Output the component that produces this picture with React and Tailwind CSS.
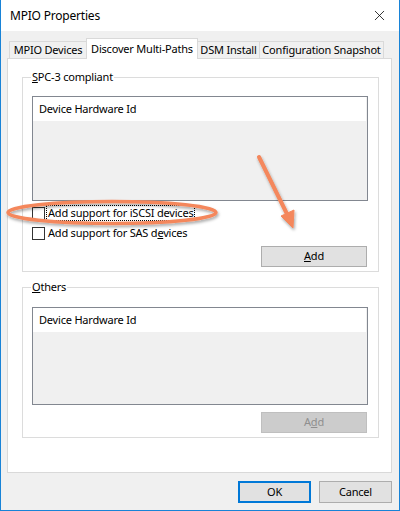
import { X } from 'lucide-react';

const font = { fontFamily: '"Noto Sans", "Open Sans", sans-serif', letterSpacing: '-0.2px' };

const Tab = ({ label, active, className }) => (
  <div
    className={
      active
        ? `relative z-10 -mb-px flex h-[21px] items-start justify-center whitespace-nowrap border border-b-0 border-[#d9d9d9] bg-white pt-[2px] ${className}`
        : `flex h-[17px] items-center justify-center whitespace-nowrap border border-b-0 border-[#d9d9d9] bg-[#f0f0f0] pt-[1px] ${className}`
    }
  >
    {label}
  </div>
);

const DeviceList = ({ height }) => (
  <div className={`flex flex-col border border-[#828790] bg-[#f0f0f0] ${height}`}>
    <div className="mr-[1px] flex h-[24px] items-center bg-white pl-[6px]">Device Hardware Id</div>
  </div>
);

const GroupBox = ({ label, children, className }) => (
  <div className={`relative ml-[14px] w-[357px] border border-[#dcdcdc] pl-[9px] pr-[10px] ${className}`}>
    <span className="absolute -top-[9px] left-[8px] bg-white px-[1px] leading-[16px]">{label}</span>
    {children}
  </div>
);

const Button = ({ children, disabled, className = '' }) => (
  <div
    className={
      disabled
        ? `flex h-[21px] w-[106px] items-center justify-center border border-[#bfbfbf] bg-[#cccccc] text-[#8f8f8f] ${className}`
        : `flex h-[21px] w-[106px] items-center justify-center border border-[#adadad] bg-[#e1e1e1] ${className}`
    }
  >
    {children}
  </div>
);

const Checkbox = ({ children, focused }) => (
  <div className="flex h-[16px] items-center">
    <div className="h-[13px] w-[13px] border border-[#333333] bg-white" />
    <span
      className={`ml-[2px] whitespace-nowrap px-[1px] leading-[14px] ${
        focused ? 'outline outline-1 outline-dotted outline-black' : ''
      }`}
    >
      {children}
    </span>
  </div>
);

export default function App() {
  return (
    <div className="relative h-[511px] w-[400px] overflow-hidden text-[11px] text-black" style={font}>
      <div className="flex h-full flex-col border-x border-b border-[#1883d7] bg-[#f0f0f0]">
        {/* Title bar */}
        <div className="flex h-[31px] items-center justify-between bg-white pl-[9px] pr-[10px]">
          <span className="text-[12px]">MPIO Properties</span>
          <X size={17} strokeWidth={1.1} className="mr-[1px]" />
        </div>

        {/* Tabs */}
        <div className="flex items-end pl-[8px] pt-[7px]">
          <Tab label="MPIO Devices" className="w-[78px]" />
          <Tab label="Discover Multi-Paths" active className="-ml-px w-[112px]" />
          <Tab label="DSM Install" className="-ml-px w-[63px]" />
          <Tab label="Configuration Snapshot" className="-ml-px w-[125px]" />
        </div>

        {/* Tab panel */}
        <div className="ml-[6px] h-[415px] w-[385px] border border-[#d9d9d9] bg-white pt-[18px]">
          <GroupBox label={<><u>S</u>PC-3 compliant</>} className="h-[195px] pt-[18px]">
            <DeviceList height="h-[105px]" />
            <div className="mt-[4px]">
              <Checkbox focused>Add support for iSCSI devices</Checkbox>
            </div>
            <div className="mt-[4px]">
              <Checkbox>
                Add support for SAS d<u>e</u>vices
              </Checkbox>
            </div>
            <div className="mt-[5px] flex justify-end pr-[1px]">
              <Button>
                <u>A</u>dd
              </Button>
            </div>
          </GroupBox>

          <GroupBox label={<><u>O</u>thers</>} className="mt-[15px] h-[151px] pt-[19px]">
            <DeviceList height="h-[98px]" />
            <div className="mt-[7px] flex justify-end pr-[1px]">
              <Button disabled>
                A<u>d</u>d
              </Button>
            </div>
          </GroupBox>
        </div>

        {/* Footer */}
        <div className="mt-[8px] flex justify-end gap-[8px] pr-[7px]">
          <div className="flex h-[22px] w-[73px] items-center justify-center border-2 border-[#0078d7] bg-[#e1e1e1]">OK</div>
          <div className="flex h-[22px] w-[73px] items-center justify-center border border-[#adadad] bg-[#e1e1e1]">Cancel</div>
        </div>
      </div>

      {/* Annotation overlay */}
      <svg className="pointer-events-none absolute left-0 top-0" width="400" height="511">
        <defs>
          <filter id="sh" x="-20%" y="-50%" width="140%" height="200%">
            <feDropShadow dx="1" dy="2" stdDeviation="1.5" floodColor="#000" floodOpacity="0.35" />
          </filter>
        </defs>
        <g filter="url(#sh)" stroke="#f4875c" fill="none">
          <ellipse cx="112" cy="212.5" rx="104" ry="11" strokeWidth="3.5" />
          <line x1="259" y1="157" x2="288" y2="216" strokeWidth="4" strokeLinecap="round" />
          <polygon points="293,228 281,216 294,210" fill="#f4875c" strokeWidth="1" strokeLinejoin="round" />
        </g>
      </svg>
    </div>
  );
}
